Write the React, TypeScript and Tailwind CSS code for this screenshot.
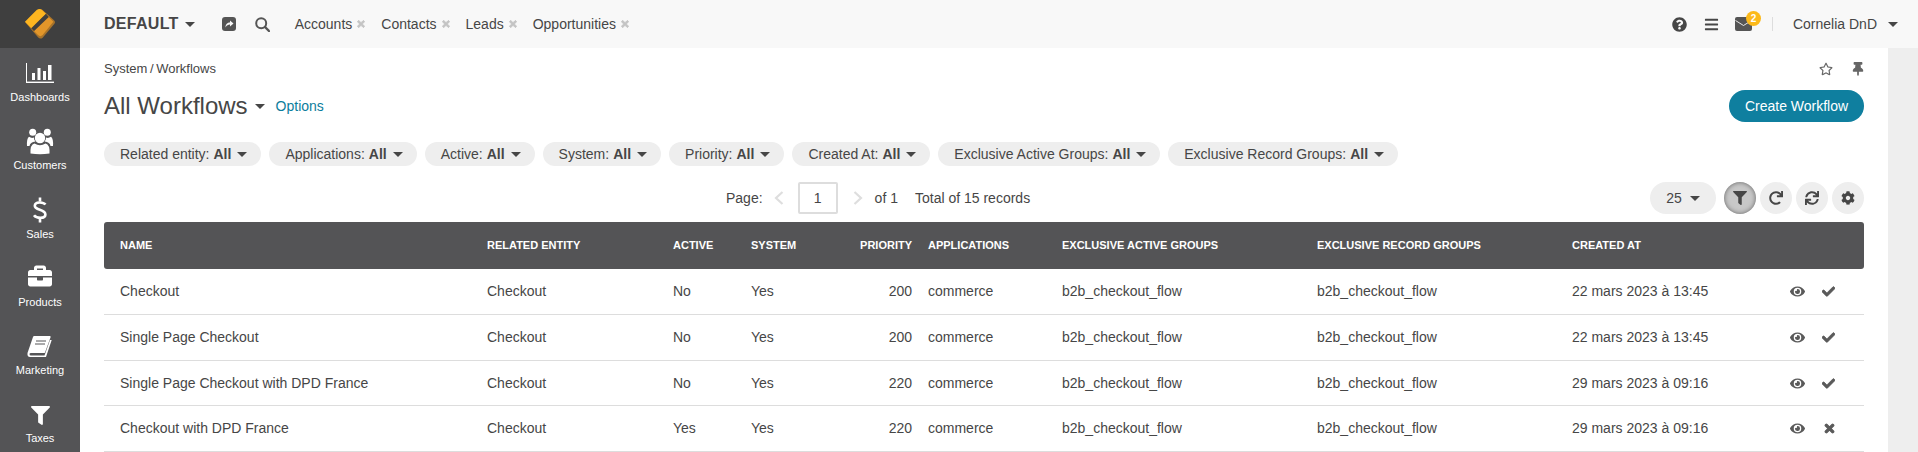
import { FaBriefcase, FaFilter, FaQuestionCircle, FaBars, FaRegStar, FaThumbtack, FaRedo, FaSync, FaCog, FaEye, FaCheck, FaTimes } from "react-icons/fa";
import type { ReactNode } from "react";

const Caret = ({ className = "" }: { className?: string }) => (
  <span className={`inline-block w-0 h-0 border-x-[5px] border-x-transparent border-t-[5px] border-t-[#464646] ${className}`} />
);

const ChartIcon = () => (
  <svg width="28" height="20" viewBox="0 0 28 20" fill="#fff">
    <rect x="0" y="0" width="1" height="20" />
    <rect x="0" y="18.6" width="28" height="1.4" />
    <rect x="6" y="10" width="3" height="7" />
    <rect x="11.5" y="5" width="3" height="12" />
    <rect x="17" y="8" width="3" height="9" />
    <rect x="22" y="2" width="3.5" height="15" />
  </svg>
);

const UsersIcon = () => (
  <svg width="40" height="32" viewBox="0 0 40 32" fill="#fff">
    <circle cx="12.7" cy="7.3" r="3.5" />
    <circle cx="27.3" cy="7.3" r="3.5" />
    <circle cx="20" cy="13" r="5.2" />
    <path d="M10.5 28.5 Q10 19.5 14.5 18.5 Q20 22 25.5 18.5 Q30 19.5 29.5 28.5 Q20 30 10.5 28.5Z" />
    <path d="M7 21 Q6.5 13.5 9 11.8 Q11.5 13.5 13.8 12.6 Q14 15 15.5 16.6 Q10 17.5 9.5 21Z" />
    <path d="M33 21 Q33.5 13.5 31 11.8 Q28.5 13.5 26.2 12.6 Q26 15 24.5 16.6 Q30 17.5 30.5 21Z" />
  </svg>
);

const DollarIcon = () => (
  <svg width="16" height="26" viewBox="0 0 16 26" fill="none" stroke="#fff" strokeWidth="2.6">
    <path d="M13.5 7.5 C11.5 5 3 4.2 2.8 8.8 C2.6 13.6 13.6 12 13.4 17.6 C13.2 22 4.5 21.6 2 18.2" />
    <path d="M8 0.5 V4.5 M8 21 V25.5" />
  </svg>
);

const BookIcon = () => (
  <svg width="40" height="30" viewBox="0 0 40 30" fill="#fff">
    <path d="M14 5 H30 Q31 5 30.5 6.5 L25 21.5 Q24.8 22 24 22 H11 Q9.5 22 9.5 23 Q9.5 24.5 11 24.5 H24.5 L30 9 H31.7 L26 26 H10 Q7 26 7.5 22 L13 6 Q13.5 5 14 5Z" />
    <path d="M16 10 H26 M15 13 H25" stroke="#545456" strokeWidth="1" fill="none" />
  </svg>
);

const ShareIcon = () => (
  <svg width="14" height="14" viewBox="0 0 14 14">
    <rect width="14" height="14" rx="3" fill="#555" />
    <path d="M3.5 10.5 C3.5 7 5.5 5.5 8 5.5 V3.5 L11.5 6.5 L8 9.5 V7.6 C6 7.6 4.7 8.4 3.5 10.5Z" fill="#f8f8f8" />
  </svg>
);

const SearchIcon = () => (
  <svg width="15" height="15" viewBox="0 0 15 15" fill="none" stroke="#555" strokeWidth="2">
    <circle cx="6.2" cy="6.2" r="5" />
    <path d="M10 10 L14 14" strokeWidth="2.4" strokeLinecap="round" />
  </svg>
);

const EnvelopeIcon = () => (
  <svg width="17" height="14" viewBox="0 0 17 14" className="block">
    <rect width="17" height="14" rx="2" fill="#555" />
    <path d="M0.5 3.5 L8.5 8.5 L16.5 3.5" fill="none" stroke="#f8f8f8" strokeWidth="0.9" />
  </svg>
);

const Logo = () => (
  <svg width="40" height="38" viewBox="0 0 120 114">
    <path d="M15 51 L52 15 Q60 9 68 15 L102 46 Q108 52 102 58 L68 98 Q61 104 54 97 Z" fill="#a8732a" />
    <path d="M15 50 L50 15 Q59 9 66 15 L78 26 L34 70 Z" fill="#fdb520" />
    <path d="M42 78 L86 36 L100 50 L68 90 Q61 97 54 90 Z" fill="#e2962a" />
    <path d="M34 70 L78 26 L86 36 L42 78 Z" fill="#3f3f3f" />
  </svg>
);

const nav: { label: string; icon: ReactNode; cls: string; mt: string }[] = [
  { label: "Dashboards", icon: <ChartIcon />, cls: "h-[68px] pt-[11px]", mt: "mt-[4px]" },
  { label: "Customers", icon: <UsersIcon />, cls: "h-[69px] pt-[11px]", mt: "mt-[4px]" },
  { label: "Sales", icon: <DollarIcon />, cls: "h-[68px] pt-[11px]", mt: "mt-[4px]" },
  { label: "Products", icon: <FaBriefcase size={24} />, cls: "h-[68px] pt-[9px]", mt: "mt-[6px]" },
  { label: "Marketing", icon: <BookIcon />, cls: "h-[68px] pt-[11px]", mt: "mt-[4px]" },
  { label: "Taxes", icon: <FaFilter size={19} />, cls: "h-[68px] pt-[12px]", mt: "mt-[3px]" },
];

const filters = ["Related entity", "Applications", "Active", "System", "Priority", "Created At", "Exclusive Active Groups", "Exclusive Record Groups"];
const tabs = ["Accounts", "Contacts", "Leads", "Opportunities"];

const rows = [
  { name: "Checkout", active: "No", prio: "200", date: "22 mars 2023 à 13:45", ok: true, h: "h-[45px]" },
  { name: "Single Page Checkout", active: "No", prio: "200", date: "22 mars 2023 à 13:45", ok: true, h: "h-[46px]" },
  { name: "Single Page Checkout with DPD France", active: "No", prio: "220", date: "29 mars 2023 à 09:16", ok: true, h: "h-[45px]" },
  { name: "Checkout with DPD France", active: "Yes", prio: "220", date: "29 mars 2023 à 09:16", ok: false, h: "h-[46px]" },
];

const ToolBtn = ({ children, active }: { children: ReactNode; active?: boolean }) => (
  <button className={`w-8 h-8 rounded-full flex items-center justify-center text-[#464646] ${active ? "bg-[#c8c8c8] shadow-[inset_0_0_5px_rgba(0,0,0,0.5)]" : "bg-[#eeeeee]"}`}>
    {children}
  </button>
);

const Chevron = ({ left }: { left?: boolean }) => (
  <svg width="10" height="14" viewBox="0 0 10 14" fill="none" stroke="#dedede" strokeWidth="2.2">
    <path d={left ? "M8.5 1 L2 7 L8.5 13" : "M1.5 1 L8 7 L1.5 13"} />
  </svg>
);

export default function App() {
  return (
    <div className="w-[1918px] h-[452px] overflow-hidden flex bg-[#eeeeee] text-[#464646] font-['Liberation_Sans',Arial,sans-serif] text-[14px]">
      <aside className="w-[80px] shrink-0 bg-[#545456] text-white flex flex-col">
        <div className="h-[48px] shrink-0 bg-[#3f3f3f] flex items-center justify-center">
          <Logo />
        </div>
        {nav.map(({ label, icon, cls, mt }) => (
          <div key={label} className={`${cls} flex flex-col items-center justify-start shrink-0`}>
            <div className="h-[28px] flex items-center justify-center">{icon}</div>
            <div className={`text-[11px] leading-[13px] ${mt}`}>{label}</div>
          </div>
        ))}
      </aside>
      <div className="flex-1 flex flex-col min-w-0">
        <header className="h-[48px] shrink-0 bg-[#f8f8f8] flex items-center pl-[24px] pr-[20px]">
          <span className="font-bold text-[16px] tracking-[0.3px]">DEFAULT</span>
          <Caret className="ml-[6px]" />
          <span className="ml-[27px]"><ShareIcon /></span>
          <span className="ml-[19px]"><SearchIcon /></span>
          <div className="flex ml-[25px] gap-[15px]">
            {tabs.map((t) => (
              <span key={t} className="flex items-center">
                {t}
                <FaTimes size={10} className="ml-[4px] text-[#c4c4c4] stroke-[50]" />
              </span>
            ))}
          </div>
          <div className="ml-auto flex items-center">
            <FaQuestionCircle size={15} />
            <FaBars size={15} className="ml-[17px]" />
            <div className="relative ml-[16px]">
              <EnvelopeIcon />
              <span className="absolute -top-[6px] -right-[9px] w-[15px] h-[15px] rounded-full bg-[#fcb91a] text-white text-[10px] font-bold flex items-center justify-center">2</span>
            </div>
            <span className="w-px h-[14px] bg-[#dddddd] ml-[20px]" />
            <span className="ml-[20px]">Cornelia DnD</span>
            <Caret className="ml-[11px]" />
          </div>
        </header>
        <main className="flex-1 min-h-0 pl-[24px] pr-[24px] mr-[30px] bg-white">
          <div className="flex items-center justify-between h-[42px]">
            <span className="text-[13px] [word-spacing:-1px]">System / Workflows</span>
            <div className="flex items-center -mr-[1px] gap-[18px]">
              <FaRegStar size={14} className="text-[#666]" />
              <FaThumbtack size={14} className="text-[#666]" />
            </div>
          </div>
          <div className="flex items-center h-[32px] justify-between">
            <div className="flex items-center">
              <span className="text-[24px] leading-none">All Workflows</span>
              <Caret className="ml-[7px]" />
              <span className="ml-[11px] text-[#0c7d9c]">Options</span>
            </div>
            <button className="h-[32px] w-[135px] rounded-full bg-[#0f7f9f] text-white">Create Workflow</button>
          </div>
          <div className="flex gap-[8px] mt-[20px] h-[24px]">
            {filters.map((f) => (
              <button key={f} className="h-[24px] rounded-full bg-[#eeeeee] pl-[16px] pr-[14px] flex items-center whitespace-nowrap">
                <span>{f}:</span>
                <span className="font-bold ml-[4px]">All</span>
                <Caret className="ml-[6px]" />
              </button>
            ))}
          </div>
          <div className="flex items-center justify-between h-[32px] mt-[16px]">
            <div className="flex items-center pl-[622px]">
              <span>Page:</span>
              <span className="ml-[11px]"><Chevron left /></span>
              <span className="ml-[14px] w-[40px] h-[32px] border-2 border-[#dddddd] rounded-[2px] flex items-center justify-center">1</span>
              <span className="ml-[15px]"><Chevron /></span>
              <span className="ml-[12px]">of 1</span>
              <span className="ml-[17px]">Total of 15 records</span>
            </div>
            <div className="flex items-center gap-[4px]">
              <button className="h-[32px] w-[66px] mr-[4px] rounded-full bg-[#eeeeee] flex items-center justify-center">
                25<Caret className="ml-[8px]" />
              </button>
              <ToolBtn active><FaFilter size={14} /></ToolBtn>
              <ToolBtn><FaRedo size={14} /></ToolBtn>
              <ToolBtn><FaSync size={14} /></ToolBtn>
              <ToolBtn><FaCog size={14} /></ToolBtn>
            </div>
          </div>
          <table className="mt-[8px] w-full table-fixed border-collapse">
            <thead>
              <tr className="h-[47px] bg-[#545456] text-white text-[11px] font-bold uppercase text-left">
                <th className="w-[367px] pl-[16px] pb-[1px] rounded-l-[3px] font-bold">Name</th>
                <th className="w-[186px] pl-[16px] pb-[1px] font-bold">Related entity</th>
                <th className="w-[78px] pl-[16px] pb-[1px] font-bold">Active</th>
                <th className="w-[110px] pl-[16px] pb-[1px] font-bold">System</th>
                <th className="w-[67px] pb-[1px] text-right font-bold">Priority</th>
                <th className="w-[134px] pl-[16px] pb-[1px] font-bold">Applications</th>
                <th className="w-[255px] pl-[16px] pb-[1px] font-bold">Exclusive Active Groups</th>
                <th className="w-[255px] pl-[16px] pb-[1px] font-bold">Exclusive Record Groups</th>
                <th className="w-[208px] pl-[16px] pb-[1px] font-bold">Created At</th>
                <th className="rounded-r-[3px]" />
              </tr>
            </thead>
            <tbody>
              {rows.map(({ name, active, prio, date, ok, h }) => (
                <tr key={name} className={`${h} border-b border-[#dddddd] [&>td]:pt-[1px]`}>
                  <td className="pl-[16px]">{name}</td>
                  <td className="pl-[16px]">Checkout</td>
                  <td className="pl-[16px]">{active}</td>
                  <td className="pl-[16px]">Yes</td>
                  <td className="text-right">{prio}</td>
                  <td className="pl-[16px]">commerce</td>
                  <td className="pl-[16px]">b2b_checkout_flow</td>
                  <td className="pl-[16px]">b2b_checkout_flow</td>
                  <td className="pl-[16px]">{date}</td>
                  <td>
                    <div className="flex items-center pl-[26px] text-[#5a5a5a]">
                      <FaEye size={15} />
                      {ok ? <FaCheck size={13} className="ml-[17px] stroke-[30]" /> : <FaTimes size={13} className="ml-[18px] stroke-[40]" />}
                    </div>
                  </td>
                </tr>
              ))}
            </tbody>
          </table>
        </main>
      </div>
    </div>
  );
}
